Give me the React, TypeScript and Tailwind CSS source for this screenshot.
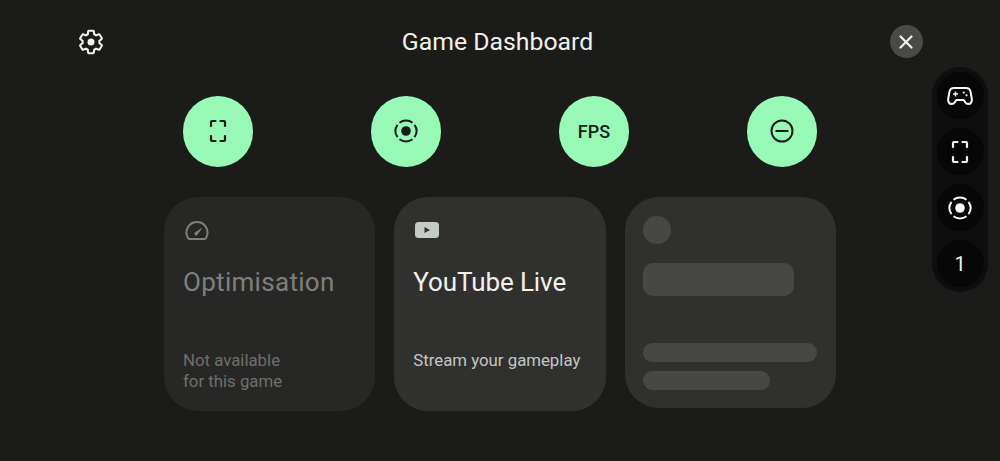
function FocusIcon({ color }: { color: string }) {
  return (
    <svg width="18" height="24" viewBox="0 0 18 24" fill="none" stroke={color} strokeWidth="2.200" strokeLinecap="round" strokeLinejoin="round">
      <path d="M2 7V3a1 1 0 0 1 1-1h3.500" />
      <path d="M11.500 2H15a1 1 0 0 1 1 1v4" />
      <path d="M16 17v4a1 1 0 0 1-1 1h-3.500" />
      <path d="M6.500 22H3a1 1 0 0 1-1-1v-4" />
    </svg>
  );
}

function RecordIcon({ color }: { color: string }) {
  return (
    <svg width="24" height="24" viewBox="0 0 24 24" fill="none" stroke={color} strokeWidth="2">
      <circle cx="12" cy="12" r="4.800" fill={color} stroke="none" />
      <path d="M5.500 3.800a10.500 10.500 0 0 1 13 0" />
      <path d="M20.500 5.900a10.500 10.500 0 0 1 0 12.200" />
      <path d="M18.500 20.200a10.500 10.500 0 0 1-13 0" />
      <path d="M3.500 18.100a10.500 10.500 0 0 1 0-12.200" />
    </svg>
  );
}

function RoundAction({ children }: { children: React.ReactNode }) {
  return (
    <div className="w-[70.5px] h-[70.5px] rounded-full bg-[#98f8b6] flex items-center justify-center text-[#1b1c1a]">
      {children}
    </div>
  );
}

function RailItem({ children }: { children: React.ReactNode }) {
  return <div className="w-[47px] h-[47px] rounded-full bg-[#070707] flex items-center justify-center">{children}</div>;
}

export default function App() {
  return (
    <div className="relative w-[1000px] h-[461px] overflow-hidden bg-[#1b1c1a] font-['Roboto',sans-serif]">
      <div className="flex items-center justify-between pt-[25px] px-[77px]">
        <svg width="28" height="28" viewBox="0 0 24 24" fill="none" stroke="#f1f1ed" strokeWidth="1.750" className="mt-[1px]">
          <path d="M19.140 12.940c.04-.3.06-.61.06-.94 0-.32-.02-.64-.07-.94l2.030-1.580c.18-.14.23-.41.12-.61l-1.920-3.320c-.12-.22-.37-.29-.59-.22l-2.390.96c-.5-.38-1.030-.7-1.620-.94L14.400 2.810c-.04-.24-.24-.41-.48-.41h-3.840c-.24 0-.43.17-.47.41L9.250 5.350c-.59.24-1.130.57-1.620.94l-2.390-.96c-.22-.08-.47 0-.59.22L2.740 8.870c-.12.21-.08.47.12.61l2.030 1.580c-.05.3-.09.63-.09.94s.02.64.07.94l-2.030 1.580c-.18.14-.23.41-.12.61l1.920 3.320c.12.22.37.29.59.22l2.390-.96c.5.38 1.030.7 1.620.94l.36 2.540c.05.24.24.41.48.41h3.840c.24 0 .44-.17.47-.41l.36-2.540c.59-.24 1.130-.56 1.620-.94l2.390.96c.22.08.47 0 .59-.22l1.920-3.320c.12-.22.07-.47-.12-.61l-2.010-1.580z" />
          <circle cx="12" cy="12" r="3" fill="#f1f1ed" stroke="none" />
        </svg>
        <h1 className="text-[24.800px] leading-[33px] text-[#f1f1ed]">Game Dashboard</h1>
        <div className="w-[33px] h-[33px] rounded-full bg-[#4a4b49] flex items-center justify-center">
          <svg width="16" height="16" viewBox="0 0 16 16" fill="none" stroke="#f4f4f0" strokeWidth="2.200" strokeLinecap="round">
            <path d="M2.500 2.500l11 11M13.500 2.500l-11 11" />
          </svg>
        </div>
      </div>

      <div className="flex flex-col items-center mt-[38px] w-full">
        <div className="flex gap-[117.500px]">
          <RoundAction>
            <FocusIcon color="#1b1c1a" />
          </RoundAction>
          <RoundAction>
            <RecordIcon color="#1b1c1a" />
          </RoundAction>
          <RoundAction>
            <span className="text-[18px] font-medium">FPS</span>
          </RoundAction>
          <RoundAction>
            <svg width="24" height="24" viewBox="0 0 24 24" fill="none" stroke="#1b1c1a" strokeWidth="2">
              <circle cx="12" cy="12" r="10.500" />
              <path d="M5.500 12h13" />
            </svg>
          </RoundAction>
        </div>

        <div className="flex items-start gap-[19px] mt-[30.500px]">
          <div className="w-[211.330px] h-[214px] rounded-[34px] bg-[#272826] flex flex-col pl-[19px] pt-[24px]">
            <svg width="24" height="19" viewBox="0 0 24 19" fill="none" stroke="#7f807d" strokeWidth="2" className="ml-[2px]">
              <path d="M4.500 18h15a2.500 2.500 0 0 0 1.900-1.800A10.500 10.500 0 1 0 2.600 16.200 2.500 2.500 0 0 0 4.500 18z" />
              <path d="M17.500 6.500l-5.100 7.300a1.700 1.700 0 0 1-2.600-2.200z" fill="#7f807d" stroke="none" />
            </svg>
            <div className="text-[26px] leading-[32px] tracking-[0.3px] text-[#7f807d] mt-[26px]">Optimisation</div>
            <div className="text-[16.800px] leading-[21px] text-[#6e6f6c] mt-[52px]">
              Not available
              <br />
              for this game
            </div>
          </div>

          <div className="w-[211.330px] h-[214px] rounded-[34px] bg-[#30312f] flex flex-col pl-[19px] pt-[25px]">
            <svg width="24" height="16" viewBox="0 0 24 16" className="ml-[2px]">
              <rect width="24" height="16" rx="3.500" fill="#c4cbc4" />
              <path d="M9.500 5v6l5.500-3z" fill="#30312f" />
            </svg>
            <div className="text-[26px] leading-[32px] tracking-[-0.1px] text-[#f1f1ed] mt-[28px]">YouTube Live</div>
            <div className="text-[16.800px] leading-[21px] text-[#c4c6c2] mt-[52px]">Stream your gameplay</div>
          </div>

          <div className="w-[211.330px] h-[211px] rounded-[34px] bg-[#30312f] flex flex-col pl-[18.500px] pt-[19px]">
            <div className="w-[28px] h-[28px] rounded-full bg-[#474846]" />
            <div className="w-[150.500px] h-[33px] rounded-[10px] bg-[#474846] mt-[19px]" />
            <div className="w-[174px] h-[19px] rounded-full bg-[#474846] mt-[47px]" />
            <div className="w-[127px] h-[19px] rounded-full bg-[#474846] mt-[9px]" />
          </div>
        </div>
      </div>

      <div className="absolute left-[932px] top-[67px] w-[56px] h-[225px] rounded-full bg-[#0d0e0d] flex flex-col items-center pt-[5px] gap-[9px]">
        <RailItem>
          <svg width="26" height="18" viewBox="0 0 26 18" fill="none" stroke="#f8f8f4" strokeWidth="2" strokeLinejoin="round">
            <path d="M7 1h12c2.500 0 4 1.300 4.500 3.500l1.300 7.500c.4 2.800-1.200 5-3.500 5-1.300 0-2.300-.6-3-1.600l-1.500-2.400H9.200l-1.500 2.400c-.7 1-1.700 1.600-3 1.600-2.300 0-3.900-2.200-3.500-5l1.300-7.500C3 2.300 4.500 1 7 1z" />
            <path d="M6 7h5M8.500 4.500v5" strokeWidth="1.500" />
            <circle cx="16.800" cy="5.600" r="1.100" fill="#f8f8f4" stroke="none" />
            <circle cx="19.500" cy="8.300" r="1.100" fill="#f8f8f4" stroke="none" />
          </svg>
        </RailItem>
        <RailItem>
          <FocusIcon color="#f8f8f4" />
        </RailItem>
        <RailItem>
          <RecordIcon color="#f8f8f4" />
        </RailItem>
        <RailItem>
          <span className="text-[20px] text-[#f1f1ed]">1</span>
        </RailItem>
      </div>
    </div>
  );
}
